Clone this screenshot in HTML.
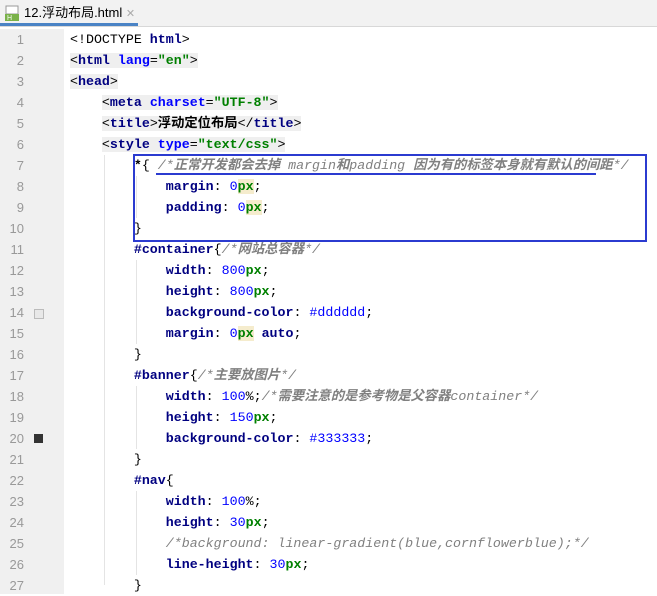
<!DOCTYPE html>
<html><head><meta charset="utf-8"><style>
body{margin:0;width:657px;height:594px;overflow:hidden;background:#fff;font-family:"Liberation Mono","Noto Sans CJK SC",monospace;font-size:13.3px;position:relative}
.tabbar{position:absolute;left:0;top:0;width:657px;height:26px;background:#f2f2f2;border-bottom:1px solid #d8d8d8}
.tab{position:absolute;left:0;top:0;width:138px;height:26px;background:#f2f2f2;border-bottom:3px solid #4a83c5;box-sizing:border-box;font-family:"Liberation Sans","Noto Sans CJK SC",sans-serif;font-size:13px;color:#000;line-height:25px;padding-left:24px}
.gut{position:absolute;left:0;top:29px;width:64px;height:565px;background:#f0f0f0}
.ln{position:absolute;left:0;width:24px;text-align:right;color:#999;font-family:"Liberation Sans",sans-serif;font-size:13px;line-height:21px}
.l{position:absolute;left:70px;white-space:pre;line-height:21px;color:#000}
.t{color:#000080;font-weight:bold}.a{color:#0000ff;font-weight:bold}.s{color:#008000;font-weight:bold}
.p{color:#000080;font-weight:bold}.n{color:#0000ff}.u{color:#008000;font-weight:bold}
.c{color:#808080;font-style:italic}.cb{color:#808080;font-style:italic;font-weight:bold}
.hl{background:#efefef}
.guide{position:absolute;width:1px;background:#e4e4e4}
</style></head><body>
<div class="tabbar"></div>
<div class="tab"><svg style="position:absolute;left:5px;top:5px" width="14" height="16"><rect x="1" y="1" width="12" height="8" fill="#fff" stroke="#999"/><rect x="0" y="9" width="14" height="7" fill="#7ab24a"/><text x="2" y="15" font-size="7" fill="#fff" font-family="Liberation Sans">H</text></svg>12.浮动布局.html <span style="color:#aaa;font-size:11px">✕</span></div>
<div class="gut"></div>
<div class="guide" style="left:104px;top:155px;height:430px"></div>
<div class="guide" style="left:136px;top:176px;height:42px"></div>
<div class="guide" style="left:136px;top:260px;height:84px"></div>
<div class="guide" style="left:136px;top:386px;height:63px"></div>
<div class="guide" style="left:136px;top:491px;height:84px"></div>
<div style="position:absolute;left:34px;top:309px;width:8px;height:8px;border:1px solid #bbb;background:#e8e8e8"></div>
<div style="position:absolute;left:34px;top:434px;width:9px;height:9px;background:#333"></div>
<div id="nums"></div>
<div class="l" style="top:29px">&lt;!DOCTYPE <span class="t">html</span>&gt;</div>
<div class="l" style="top:50px"><span class="hl">&lt;<span class="t">html </span><span class="a">lang</span>=<span class="s">"en"</span>&gt;</span></div>
<div class="l" style="top:71px"><span class="hl">&lt;<span class="t">head</span>&gt;</span></div>
<div class="l" style="top:92px">    <span class="hl">&lt;<span class="t">meta </span><span class="a">charset</span>=<span class="s">"UTF-8"</span>&gt;</span></div>
<div class="l" style="top:113px">    <span class="hl">&lt;<span class="t">title</span>&gt;<b>浮动定位布局</b>&lt;/<span class="t">title</span>&gt;</span></div>
<div class="l" style="top:134px">    <span class="hl">&lt;<span class="t">style </span><span class="a">type</span>=<span class="s">"text/css"</span>&gt;</span></div>
<div class="l" style="top:155px">        <b>*</b>{ <span class="c">/*</span><span class="cb">正常开发都会去掉</span><span class="c"> margin</span><span class="cb">和</span><span class="c">padding </span><span class="cb">因为有的标签本身就有默认的间距</span><span class="c">*/</span></div>
<div class="l" style="top:176px">            <span class="p">margin</span>: <span class="n">0</span><span class="u" style="background:#f5eccd">px</span>;</div>
<div class="l" style="top:197px">            <span class="p">padding</span>: <span class="n">0</span><span class="u" style="background:#f5eccd">px</span>;</div>
<div class="l" style="top:218px">        }</div>
<div class="l" style="top:239px">        <span class="p">#container</span>{<span class="c">/*</span><span class="cb">网站总容器</span><span class="c">*/</span></div>
<div class="l" style="top:260px">            <span class="p">width</span>: <span class="n">800</span><span class="u">px</span>;</div>
<div class="l" style="top:281px">            <span class="p">height</span>: <span class="n">800</span><span class="u">px</span>;</div>
<div class="l" style="top:302px">            <span class="p">background-color</span>: <span class="n">#dddddd</span>;</div>
<div class="l" style="top:323px">            <span class="p">margin</span>: <span class="n">0</span><span class="u" style="background:#f5eccd">px</span> <span class="p">auto</span>;</div>
<div class="l" style="top:344px">        }</div>
<div class="l" style="top:365px">        <span class="p">#banner</span>{<span class="c">/*</span><span class="cb">主要放图片</span><span class="c">*/</span></div>
<div class="l" style="top:386px">            <span class="p">width</span>: <span class="n">100</span>%;<span class="c">/*</span><span class="cb">需要注意的是参考物是父容器</span><span class="c">container*/</span></div>
<div class="l" style="top:407px">            <span class="p">height</span>: <span class="n">150</span><span class="u">px</span>;</div>
<div class="l" style="top:428px">            <span class="p">background-color</span>: <span class="n">#333333</span>;</div>
<div class="l" style="top:449px">        }</div>
<div class="l" style="top:470px">        <span class="p">#nav</span>{</div>
<div class="l" style="top:491px">            <span class="p">width</span>: <span class="n">100</span>%;</div>
<div class="l" style="top:512px">            <span class="p">height</span>: <span class="n">30</span><span class="u">px</span>;</div>
<div class="l" style="top:533px">            <span class="c">/*background: linear-gradient(blue,cornflowerblue);*/</span></div>
<div class="l" style="top:554px">            <span class="p">line-height</span>: <span class="n">30</span><span class="u">px</span>;</div>
<div class="l" style="top:575px">        }</div>
<div style="position:absolute;left:133px;top:154px;width:510px;height:84px;border:2px solid #2b3bd0"></div>
<div style="position:absolute;left:156px;top:173px;width:440px;height:2px;background:#2b3bd0"></div>
<div class="ln" style="top:29px">1</div><div class="ln" style="top:50px">2</div><div class="ln" style="top:71px">3</div><div class="ln" style="top:92px">4</div><div class="ln" style="top:113px">5</div><div class="ln" style="top:134px">6</div><div class="ln" style="top:155px">7</div><div class="ln" style="top:176px">8</div><div class="ln" style="top:197px">9</div><div class="ln" style="top:218px">10</div><div class="ln" style="top:239px">11</div><div class="ln" style="top:260px">12</div><div class="ln" style="top:281px">13</div><div class="ln" style="top:302px">14</div><div class="ln" style="top:323px">15</div><div class="ln" style="top:344px">16</div><div class="ln" style="top:365px">17</div><div class="ln" style="top:386px">18</div><div class="ln" style="top:407px">19</div><div class="ln" style="top:428px">20</div><div class="ln" style="top:449px">21</div><div class="ln" style="top:470px">22</div><div class="ln" style="top:491px">23</div><div class="ln" style="top:512px">24</div><div class="ln" style="top:533px">25</div><div class="ln" style="top:554px">26</div><div class="ln" style="top:575px">27</div>
</body></html>
